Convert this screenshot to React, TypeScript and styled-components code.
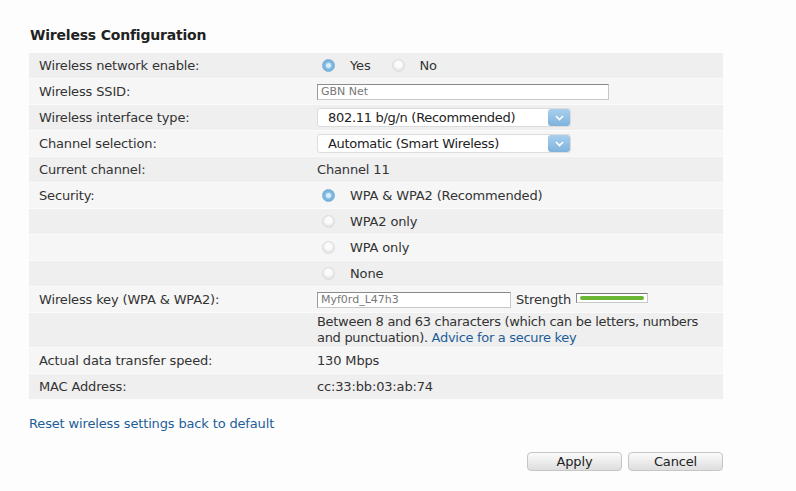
import React from 'react';
import styled, { createGlobalStyle } from 'styled-components';

const GlobalStyle = createGlobalStyle`
  html, body {
    margin: 0;
    padding: 0;
    background: #fdfdfd;
  }
  body {
    font-family: "DejaVu Sans", Verdana, sans-serif;
    font-size: 13px;
    letter-spacing: -0.15px;
    color: #333333;
  }
`;

const Page = styled.div`
  width: 796px;
  height: 491px;
  padding: 26px 73px 0 29px;
  box-sizing: border-box;
  overflow: hidden;
`;

const Title = styled.h2`
  margin: 0 0 8px 1px;
  font-size: 14px;
  font-weight: bold;
  letter-spacing: -0.2px;
  color: #222222;
  line-height: 19px;
`;

const Table = styled.div`
  display: flex;
  flex-direction: column;
`;

const Row = styled.div<{ $shade: boolean; $tall?: boolean }>`
  display: grid;
  grid-template-columns: 288px 1fr;
  align-items: center;
  min-height: ${p => (p.$tall ? '33px' : '25px')};
  background: ${p => (p.$shade ? '#efefef' : '#f6f6f6')};
  border-bottom: 1px solid #fbfbfb;
`;

const Label = styled.div`
  padding-left: 10px;
  color: #333333;
`;

const Value = styled.div`
  display: flex;
  align-items: center;
  gap: 5px;
  color: #333333;
`;

const RadioGroup = styled.label`
  display: flex;
  align-items: center;
  gap: 15px;
  margin-left: 5px;
  margin-right: 11px;
`;

const RadioDot = styled.span<{ $on: boolean }>`
  display: inline-block;
  width: 13px;
  height: 13px;
  border-radius: 50%;
  box-sizing: border-box;
  background: ${p =>
    p.$on
      ? 'radial-gradient(circle at 50% 50%, #d8ecfa 0 2px, #8cc2e6 3px, #6aa8d6 6px)'
      : 'radial-gradient(circle at 50% 40%, #fbfbfb 0 3px, #e4e4e4 6px)'};
  border: 1px solid ${p => (p.$on ? '#7fb2da' : '#dcdcdc')};
`;

const TextInput = styled.div<{ $width: number }>`
  width: ${p => p.$width}px;
  height: 16px;
  box-sizing: border-box;
  background: #ffffff;
  border: 1px solid #c8c8c8;
  border-top-color: #8a8a8a;
  border-left-color: #9a9a9a;
  font-size: 11px;
  letter-spacing: 0;
  color: #777777;
  padding-left: 3px;
  line-height: 14px;
`;

const Select = styled.div`
  width: 254px;
  height: 19px;
  box-sizing: border-box;
  display: flex;
  align-items: center;
  justify-content: space-between;
  background: #ffffff;
  border: 1px solid #dcdcdc;
  border-radius: 3px;
  padding-left: 10px;
  letter-spacing: -0.3px;
  color: #222222;
`;

const SelectArrow = styled.span`
  width: 22px;
  height: 17px;
  display: flex;
  align-items: center;
  justify-content: center;
  background: linear-gradient(#a9cfec, #7fb3dc);
  border-radius: 3px;
`;

const Strength = styled.span`
  display: inline-block;
  width: 72px;
  height: 10px;
  box-sizing: border-box;
  background: #ffffff;
  border: 1px solid #c8c8c8;
  border-top-color: #777777;
  border-left-color: #888888;
  padding: 2px 3px;
  margin-top: -4px;
`;

const StrengthFill = styled.span`
  display: block;
  height: 4px;
  background: #68b634;
  border-radius: 2px;
`;

const Help = styled.p`
  margin: 0;
  line-height: 16px;
  padding: 1px 0;
  letter-spacing: -0.3px;
`;

const Link = styled.a`
  color: #1d5e98;
  text-decoration: none;
`;

const ResetLink = styled(Link)`
  display: block;
  margin-top: 16px;
  letter-spacing: -0.15px;
`;

const Actions = styled.div`
  display: flex;
  justify-content: flex-end;
  gap: 6px;
  margin-top: 21px;
`;

const Button = styled.button`
  width: 95px;
  height: 19px;
  border: 1px solid #c6c6c6;
  border-radius: 4px;
  background: linear-gradient(#fbfbfb, #e9e9e9 60%, #dedede);
  font-family: inherit;
  font-size: 13px;
  letter-spacing: -0.15px;
  color: #222222;
  padding: 0;
  line-height: 17px;
`;

const Chevron = () => (
  <svg width="9" height="6" viewBox="0 0 9 6">
    <path d="M1 1 L4.5 4.5 L8 1" fill="none" stroke="#ffffff" strokeWidth="1.6" />
  </svg>
);

const Radio: React.FC<{ on: boolean; text: string }> = ({ on, text }) => (
  <RadioGroup>
    <RadioDot $on={on} />
    <span>{text}</span>
  </RadioGroup>
);

export default function App() {
  return (
    <Page>
      <GlobalStyle />
      <Title>Wireless Configuration</Title>
      <Table>
        <Row $shade>
          <Label>Wireless network enable:</Label>
          <Value>
            <Radio on text="Yes" />
            <Radio on={false} text="No" />
          </Value>
        </Row>
        <Row $shade={false}>
          <Label>Wireless SSID:</Label>
          <Value>
            <TextInput $width={292}>GBN Net</TextInput>
          </Value>
        </Row>
        <Row $shade>
          <Label>Wireless interface type:</Label>
          <Value>
            <Select>
              802.11 b/g/n (Recommended)
              <SelectArrow><Chevron /></SelectArrow>
            </Select>
          </Value>
        </Row>
        <Row $shade={false}>
          <Label>Channel selection:</Label>
          <Value>
            <Select>
              Automatic (Smart Wireless)
              <SelectArrow><Chevron /></SelectArrow>
            </Select>
          </Value>
        </Row>
        <Row $shade>
          <Label>Current channel:</Label>
          <Value>Channel 11</Value>
        </Row>
        <Row $shade={false}>
          <Label>Security:</Label>
          <Value><Radio on text="WPA & WPA2 (Recommended)" /></Value>
        </Row>
        <Row $shade>
          <Label />
          <Value><Radio on={false} text="WPA2 only" /></Value>
        </Row>
        <Row $shade={false}>
          <Label />
          <Value><Radio on={false} text="WPA only" /></Value>
        </Row>
        <Row $shade>
          <Label />
          <Value><Radio on={false} text="None" /></Value>
        </Row>
        <Row $shade={false}>
          <Label>Wireless key (WPA &amp; WPA2):</Label>
          <Value>
            <TextInput $width={194}>Myf0rd_L47h3</TextInput>
            <span>Strength</span>
            <Strength><StrengthFill /></Strength>
          </Value>
        </Row>
        <Row $shade $tall>
          <Label />
          <Help>
            Between 8 and 63 characters (which can be letters, numbers
            <br />
            and punctuation). <Link href="#">Advice for a secure key</Link>
          </Help>
        </Row>
        <Row $shade={false}>
          <Label>Actual data transfer speed:</Label>
          <Value>130 Mbps</Value>
        </Row>
        <Row $shade>
          <Label>MAC Address:</Label>
          <Value>cc:33:bb:03:ab:74</Value>
        </Row>
      </Table>
      <ResetLink href="#">Reset wireless settings back to default</ResetLink>
      <Actions>
        <Button>Apply</Button>
        <Button>Cancel</Button>
      </Actions>
    </Page>
  );
}
